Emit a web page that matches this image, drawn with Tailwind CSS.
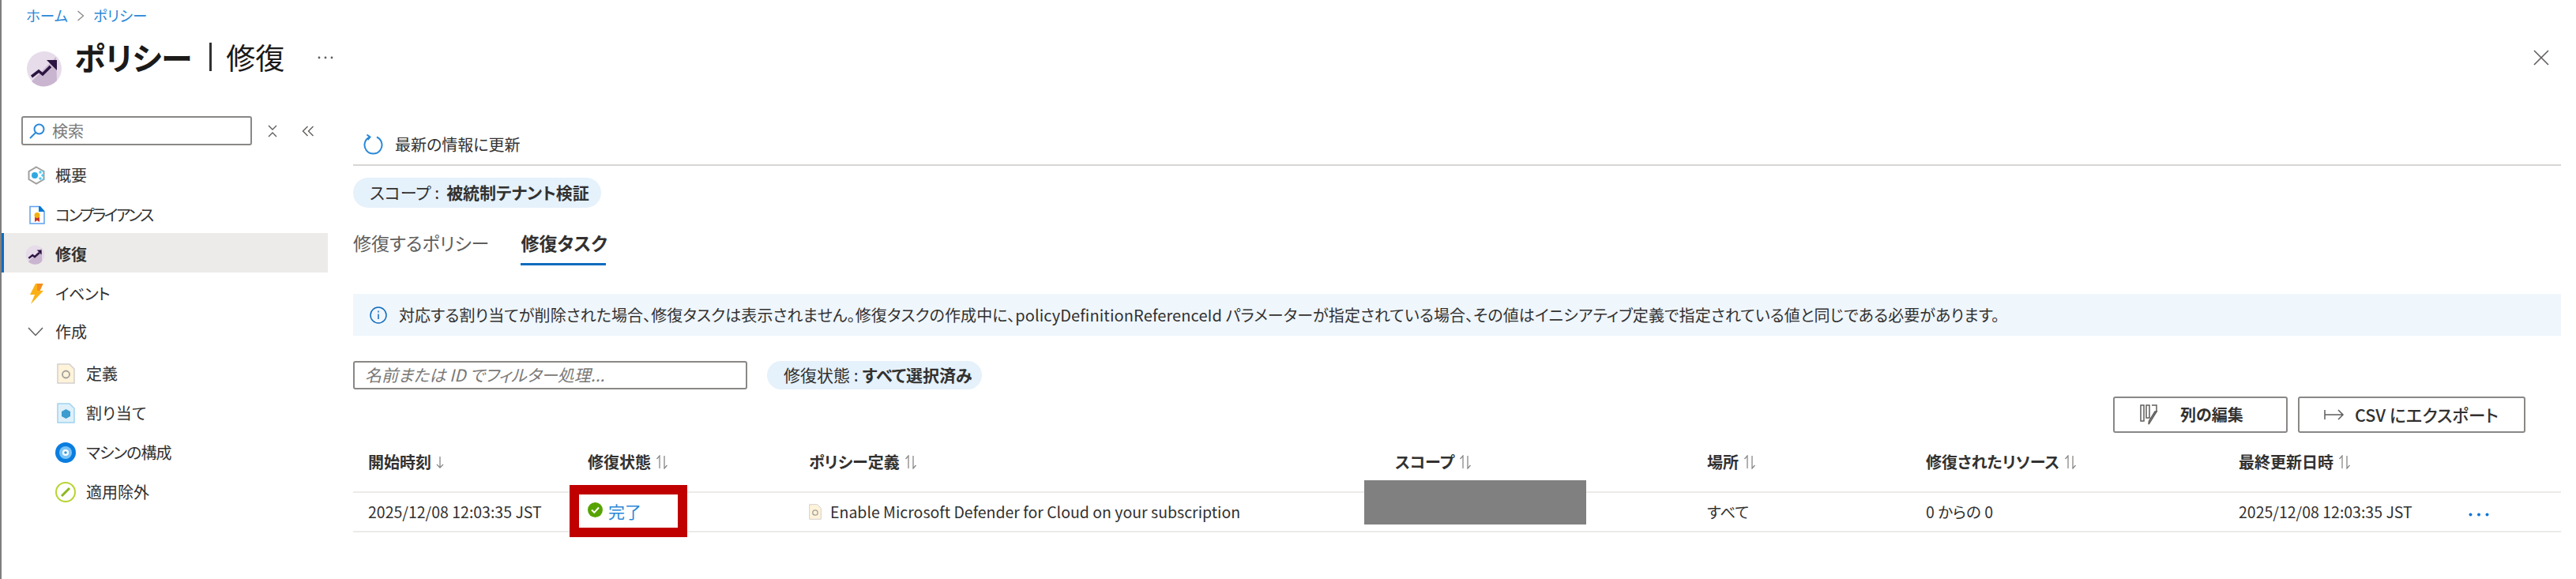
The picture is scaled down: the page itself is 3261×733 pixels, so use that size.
<!DOCTYPE html>
<html lang="ja">
<head>
    <meta charset="UTF-8">
    <title>ポリシー | 修復</title>
    <script src="https://cdn.jsdelivr.net/npm/@tailwindcss/browser@4"></script>
</head>
<body class="bg-white h-[733px] overflow-hidden font-['Noto_Sans_CJK_JP','Noto_Sans',sans-serif] [font-feature-settings:'palt'] text-[20px] text-[#323130]">
<div class="relative h-[733px] border-l-2 border-[#7f7f7f]">

    <!-- page header -->
    <header class="h-[147px] pl-[31px] relative">
        <nav class="h-[40px] flex items-center gap-[11px] text-[18.500px] text-[#2b88d8]">
            <span>ホーム</span>
            <svg width="10" height="14" viewBox="0 0 10 14" fill="none" stroke="#8a8886" stroke-width="1.3"><path d="M1.5 1l7 6-7 6"/></svg>
            <span>ポリシー</span>
        </nav>
        <div class="flex">
            <svg class="mt-[24px]" width="46" height="46" viewBox="0 0 46 46">
                <circle cx="23" cy="23" r="22" fill="#e6dcea"/>
                <path d="M7 39A22 22 0 0 0 39 38L38 8z" fill="#c9b5d0"/>
                <path d="M7 33l9-7 5 4 10-10" fill="none" stroke="#2c1440" stroke-width="3.5"/>
                <path d="M26 12h13v13z" fill="#2c1440"/>
            </svg>
            <h1 class="ml-[15px] mt-[7px] h-[50px] flex items-center leading-none text-[#1b1a19]">
                <span class="font-bold text-[40px]">ポリシー</span>
                <span class="ml-[22px] mr-[18px] w-[3px] h-[36px] bg-[#323130]"></span>
                <span class="text-[37px]">修復</span>
            </h1>
            <svg class="ml-[42px] mt-[30px]" width="20" height="6" viewBox="0 0 20 6" fill="#605e5c"><circle cx="2" cy="3" r="1.400"/><circle cx="10" cy="3" r="1.400"/><circle cx="18" cy="3" r="1.400"/></svg>
        </div>
        <svg class="absolute right-[34px] top-[63px]" width="20" height="20" viewBox="0 0 20 20" stroke="#605e5c" stroke-width="1.6"><path d="M1 1l18 18M19 1L1 19"/></svg>
    </header>

    <div class="flex">
        <!-- left nav -->
        <aside class="w-[413px] shrink-0 text-[20px] text-[#323130]">
            <div class="flex items-center h-[37px] pl-[25px]">
                <div class="w-[292px] h-[37px] border-2 border-[#8a8886] rounded-[3px] flex items-center pl-[8px]">
                    <svg width="20" height="20" viewBox="0 0 20 20" fill="none" stroke="#2b88d8" stroke-width="2"><circle cx="12.5" cy="7.5" r="6"/><path d="M8 12l-7 7"/></svg>
                    <span class="ml-[9px] text-[20px] text-[#7a7876]">検索</span>
                </div>
                <svg class="ml-[19px]" width="14" height="16" viewBox="0 0 14 16" fill="none" stroke="#605e5c" stroke-width="1.4"><path d="M2 1l5 5 5-5M2 15l5-5 5 5"/></svg>
                <svg class="ml-[30px]" width="16" height="14" viewBox="0 0 16 14" fill="none" stroke="#605e5c" stroke-width="1.4"><path d="M7.5 1l-6 6 6 6M14.5 1l-6 6 6 6"/></svg>
            </div>
            <ul class="mt-[11px]">
                <li class="h-[50px] pt-[4px] flex items-center pl-[32px] gap-[12px]">
                    <svg width="24" height="24" viewBox="0 0 24 24"><path d="M12 1.5l9.5 5.5v10L12 22.5 2.500 17V7z" fill="none" stroke="#a19f9d" stroke-width="2"/><circle cx="10" cy="12" r="4" fill="#32a8e0"/><circle cx="17" cy="8" r="1.700" fill="#50c7f0"/><circle cx="20" cy="12" r="1.700" fill="#50c7f0"/><circle cx="17" cy="16" r="1.700" fill="#50c7f0"/><circle cx="21" cy="7" r="1.300" fill="#50c7f0"/><circle cx="21" cy="17" r="1.300" fill="#50c7f0"/></svg>
                    <span>概要</span>
                </li>
                <li class="h-[50px] pt-[4px] flex items-center pl-[35px] gap-[13px]">
                    <svg width="20" height="24" viewBox="0 0 20 24"><path d="M1 1.500h12l6 6V23H1z" fill="#fff" stroke="#5ea0ef" stroke-width="1.500"/><path d="M12 1h2l5 6v1h-7z" fill="#0078d4"/><path d="M7 14h6v7l-3-2-3 2z" fill="#c8352b"/><circle cx="10" cy="12.500" r="3.500" fill="#f2b010"/></svg>
                    <span class="tracking-[-2.500px]">コンプライアンス</span>
                </li>
                <li class="relative h-[50px] pt-[4px] flex items-center pl-[30px] gap-[13px] font-bold bg-[#edebe9]">
                    <span class="absolute left-0 top-0 bottom-0 w-[3px] bg-[#0f6cbd]"></span>
                    <svg width="25" height="25" viewBox="0 0 46 46">
                        <circle cx="23" cy="23" r="22" fill="#e6dcea"/>
                        <path d="M7 39A22 22 0 0 0 39 38L38 8z" fill="#c9b5d0"/>
                        <path d="M8 31l9-7 5 4 11-10" fill="none" stroke="#2c1440" stroke-width="4.500"/>
                        <path d="M27 12h11v11z" fill="#2c1440"/>
                    </svg>
                    <span>修復</span>
                </li>
                <li class="h-[50px] pt-[4px] flex items-center pl-[36px] gap-[15px]">
                    <svg width="17" height="26" viewBox="0 0 17 26"><path d="M7 0h9.500l-4 9H17L1 26l5-12H0z" fill="#fbb116"/><path d="M9 0h7.500l-4 9H9z" fill="#f78d1e"/></svg>
                    <span class="tracking-[-0.500px]">イベント</span>
                </li>
                <li class="h-[50px] pb-[1px] flex items-center pl-[33px] gap-[15px]">
                    <svg width="20" height="12" viewBox="0 0 20 12" fill="none" stroke="#605e5c" stroke-width="1.500"><path d="M1 1l9 9.500L19 1"/></svg>
                    <span>作成</span>
                </li>
                <li class="mt-[1px] h-[50px] pt-[4px] flex items-center pl-[70px] gap-[14px]">
                    <svg width="23" height="26" viewBox="0 0 23 26"><path d="M1 1h15l6 6v18H1z" fill="#fff3d9" stroke="#d2d0ce" stroke-width="1.500"/><circle cx="11.500" cy="14" r="4.500" fill="none" stroke="#a19f9d" stroke-width="1.800"/></svg>
                    <span>定義</span>
                </li>
                <li class="h-[50px] pt-[4px] flex items-center pl-[70px] gap-[14px]">
                    <svg width="23" height="26" viewBox="0 0 23 26"><path d="M1 1h15l6 6v18H1z" fill="#dff0fa" stroke="#9fd4ee" stroke-width="1.500"/><path d="M11.500 8l5.500 3v6l-5.500 3L6 17v-6z" fill="#3b9ccf"/></svg>
                    <span class="tracking-[0.500px]">割り当て</span>
                </li>
                <li class="h-[50px] pt-[4px] flex items-center pl-[68px] gap-[13px]">
                    <svg width="26" height="26" viewBox="0 0 26 26"><circle cx="13" cy="13" r="13" fill="#0a7de0"/><circle cx="13" cy="13" r="8" fill="#7cc4f5"/><circle cx="13" cy="13" r="4" fill="#fff"/><circle cx="13" cy="13" r="1.800" fill="#3c98e0"/></svg>
                    <span class="tracking-[-1px]">マシンの構成</span>
                </li>
                <li class="h-[50px] pt-[4px] flex items-center pl-[68px] gap-[13px]">
                    <svg width="26" height="26" viewBox="0 0 26 26" fill="none"><circle cx="13" cy="13" r="12" stroke="#b8d432" stroke-width="2"/><path d="M8 18l10-10" stroke="#8cb820" stroke-width="3"/></svg>
                    <span>適用除外</span>
                </li>
            </ul>
        </aside>

        <!-- main pane -->
        <main class="flex-1 min-w-0 pl-[32px] pr-[19px]">
            <div class="h-[63px] border-b-2 border-[#d8d6d4] flex items-center pl-[13px] pt-[10px] gap-[15px]">
                <svg width="25" height="27" viewBox="0 0 25 27" fill="none" stroke="#2b88d8" stroke-width="2"><path d="M8 4.500a11 11 0 1 0 9 0"/><path d="M4.500 1.500l4 3-3 3.500"/></svg>
                <span>最新の情報に更新</span>
            </div>
            <div class="mt-[15px] h-[38px] w-[314px] rounded-full bg-[#e5f1fb] flex items-center pl-[21px] text-[21px]">
                <span>スコープ : </span><span class="font-bold ml-[9px]">被統制テナント検証</span>
            </div>
            <div class="mt-[27px] h-[46px] flex gap-[40px] text-[23px]">
                <span class="text-[#605e5c] h-[34px] leading-[34px]">修復するポリシー</span>
                <span class="font-bold h-[46px] leading-[34px] border-b-[3px] border-[#0f6cbd] w-[108px] whitespace-nowrap">修復タスク</span>
            </div>
            <div class="mt-[36px] h-[53px] bg-[#eff6fc] flex items-center pl-[21px] gap-[15px]">
                <svg width="22" height="22" viewBox="0 0 22 22" fill="none" stroke="#0f6cbd" stroke-width="1.500"><circle cx="11" cy="11" r="10"/><path d="M11 9.500v6.500M11 5.500v2"/></svg>
                <span class="tracking-[0.100px]">対応する割り当てが削除された場合、修復タスクは表示されません。修復タスクの作成中に、policyDefinitionReferenceId パラメーターが指定されている場合、その値はイニシアティブ定義で指定されている値と同じである必要があります。</span>
            </div>
            <div class="mt-[32px] flex gap-[25px]">
                <div class="w-[499px] h-[36px] border-2 border-[#8a8886] rounded-[3px] pl-[13px] flex items-center italic text-[21px] text-[#7a7876]">名前または ID でフィルター処理...</div>
                <div class="h-[36px] w-[272px] rounded-full bg-[#e5f1fb] flex items-center pl-[21px] text-[21px]">
                    <span>修復状態 : </span><span class="font-bold ml-[5px]">すべて選択済み</span>
                </div>
            </div>
            <div class="mt-[9px] flex justify-end gap-[13px] pr-[45px] font-bold">
                <button class="w-[221px] h-[46px] border-2 border-[#8a8886] rounded-[3px] flex items-center pl-[32px] gap-[27px]">
                    <svg width="24" height="26" viewBox="0 0 24 26" fill="none" stroke="#605e5c" stroke-width="1.500"><path d="M1 1h4v20H1zM8 1h4v16H8zM15 1h6v9"/><path d="M21 9l-8 13-2 3 .5-4 7.500-12z"/></svg>
                    <span>列の編集</span>
                </button>
                <button class="w-[288px] h-[46px] border-2 border-[#8a8886] rounded-[3px] flex items-center pl-[31px] gap-[13px] font-medium text-[21.500px]">
                    <svg width="26" height="16" viewBox="0 0 26 16" fill="none" stroke="#605e5c" stroke-width="1.500"><path d="M1 2v12M1 8h23M18 2l6 6-6 6"/></svg>
                    <span>CSV にエクスポート</span>
                </button>
            </div>

            <!-- task table -->
            <div class="relative">
                <div class="h-[76px] grid grid-cols-[278px_280px_742px_395px_277px_396px_1fr] pl-[19px] items-center font-bold border-b-2 border-[#edebe9]">
                    <span class="flex items-center gap-[6px]">開始時刻 <svg width="10" height="16" viewBox="0 0 10 16" fill="none" stroke="#8a8886" stroke-width="1.300"><path d="M5 1v14M1 11l4 4 4-4"/></svg></span>
                    <span class="flex items-center gap-[6px]">修復状態 <svg width="16" height="18" viewBox="0 0 16 18" fill="none" stroke="#8a8886" stroke-width="1.300"><path d="M5 17V1L1.500 5M11 1v16l3.500-4"/></svg></span>
                    <span class="flex items-center gap-[6px]">ポリシー定義 <svg width="16" height="18" viewBox="0 0 16 18" fill="none" stroke="#8a8886" stroke-width="1.300"><path d="M5 17V1L1.500 5M11 1v16l3.500-4"/></svg></span>
                    <span class="flex items-center gap-[6px]">スコープ <svg width="16" height="18" viewBox="0 0 16 18" fill="none" stroke="#8a8886" stroke-width="1.300"><path d="M5 17V1L1.500 5M11 1v16l3.500-4"/></svg></span>
                    <span class="flex items-center gap-[6px]">場所 <svg width="16" height="18" viewBox="0 0 16 18" fill="none" stroke="#8a8886" stroke-width="1.300"><path d="M5 17V1L1.500 5M11 1v16l3.500-4"/></svg></span>
                    <span class="flex items-center gap-[6px]">修復されたリソース <svg width="16" height="18" viewBox="0 0 16 18" fill="none" stroke="#8a8886" stroke-width="1.300"><path d="M5 17V1L1.500 5M11 1v16l3.500-4"/></svg></span>
                    <span class="flex items-center gap-[6px]">最終更新日時 <svg width="16" height="18" viewBox="0 0 16 18" fill="none" stroke="#8a8886" stroke-width="1.300"><path d="M5 17V1L1.500 5M11 1v16l3.500-4"/></svg></span>
                </div>
                <div class="h-[50px] grid grid-cols-[278px_280px_742px_395px_277px_396px_1fr] pl-[19px] items-center border-b-2 border-[#edebe9] text-[19.500px]">
                    <span>2025/12/08 12:03:35 JST</span>
                    <span class="flex items-center gap-[7px]">
                        <svg class="-mt-[6px]" width="19" height="19" viewBox="0 0 19 19" fill="none"><circle cx="9.500" cy="9.500" r="9.500" fill="#57a300"/><path d="M5 9.500l3.300 3.300L14 6.500" stroke="#fff" stroke-width="2"/></svg>
                        <span class="text-[#2b88d8] text-[21px]">完了</span>
                    </span>
                    <span class="flex items-center gap-[11px]">
                        <svg width="16" height="20" viewBox="0 0 16 20"><path d="M.700.700h10l4.600 4.600v14H.700z" fill="#fff3d9" stroke="#d2d0ce"/><circle cx="8" cy="11" r="3.200" fill="none" stroke="#a19f9d" stroke-width="1.300"/></svg>
                        Enable Microsoft Defender for Cloud on your subscription
                    </span>
                    <span></span>
                    <span>すべて</span>
                    <span>0 からの 0</span>
                    <span class="flex items-center">
                        <span class="w-[291px]">2025/12/08 12:03:35 JST</span>
                        <svg class="mt-[6px]" width="26" height="5" viewBox="0 0 26 5" fill="#0f78d4"><circle cx="2.500" cy="2.500" r="2"/><circle cx="13" cy="2.500" r="2"/><circle cx="23.500" cy="2.500" r="2"/></svg>
                    </span>
                </div>
                <!-- annotations pasted over the screenshot -->
                <div class="absolute left-[274px] top-[66px] w-[149px] h-[66px] border-[12px] border-[#c00000]"></div>
                <div class="absolute left-[1280px] top-[60px] w-[281px] h-[56px] bg-[#808080]"></div>
            </div>
        </main>
    </div>
</div>
</body>
</html>
